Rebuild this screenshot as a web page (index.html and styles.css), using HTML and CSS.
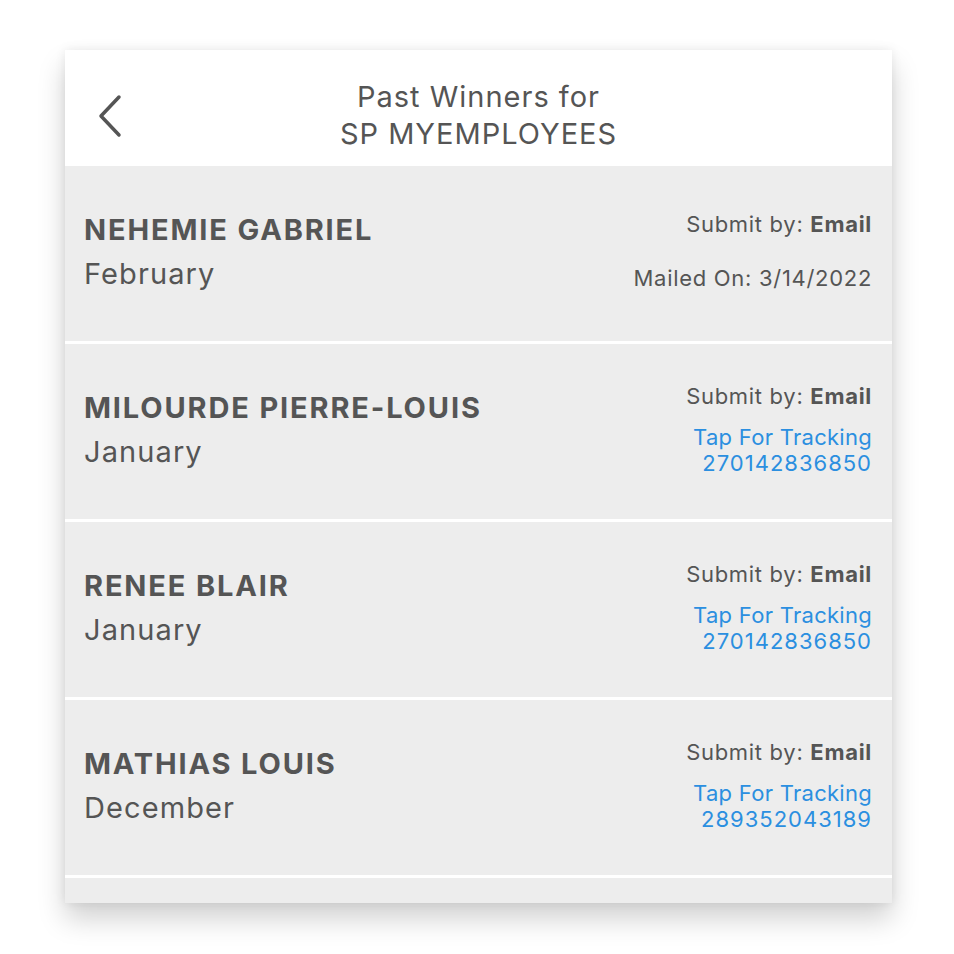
FILE: index.html
```html
<!DOCTYPE html>
<html>
<head>
<meta charset="utf-8">
<link rel="stylesheet" href="styles.css">
</head>
<body>
<div class="card">
  <header class="header">
    <svg class="back" width="30" height="44" viewBox="0 0 30 44"><path d="M24 3 L6 22 L24 41" fill="none" stroke="#555" stroke-width="3.5" stroke-linecap="round" stroke-linejoin="round"/></svg>
    <div class="title">Past Winners for<br>SP MYEMPLOYEES</div>
  </header>
  <div class="row">
    <div class="left"><div class="name">NEHEMIE GABRIEL</div><div class="month">February</div></div>
    <div class="right"><div class="submit">Submit by: <b>Email</b></div><div class="mailed">Mailed On: 3/14/2022</div></div>
  </div>
  <div class="row">
    <div class="left"><div class="name">MILOURDE PIERRE-LOUIS</div><div class="month">January</div></div>
    <div class="right"><div class="submit sp">Submit by: <b>Email</b></div><div class="link">Tap For Tracking</div><div class="link num">270142836850</div></div>
  </div>
  <div class="row">
    <div class="left"><div class="name">RENEE BLAIR</div><div class="month">January</div></div>
    <div class="right"><div class="submit sp">Submit by: <b>Email</b></div><div class="link">Tap For Tracking</div><div class="link num">270142836850</div></div>
  </div>
  <div class="row">
    <div class="left"><div class="name">MATHIAS LOUIS</div><div class="month">December</div></div>
    <div class="right"><div class="submit sp">Submit by: <b>Email</b></div><div class="link">Tap For Tracking</div><div class="link num">289352043189</div></div>
  </div>
  <div class="row partial"></div>
</div>
</body>
</html>
```
FILE: styles.css
```css
html, body { margin: 0; padding: 0; background: #fff; }
body { width: 954px; height: 954px; overflow: hidden; font-family: Inter, "Helvetica Neue", Arial, sans-serif; color: #555; }
.card {
  margin: 50px 0 0 65px;
  width: 827px;
  height: 853px;
  overflow: hidden;
  background: #ededed;
  box-shadow: 0 16px 26px rgba(0,0,0,0.18), 0 0 10px rgba(0,0,0,0.08);
}
.header {
  height: 116px;
  background: #fff;
  position: relative;
  display: flex;
  align-items: center;
  justify-content: center;
}
.back { position: absolute; left: 30px; top: 44px; }
.title { text-align: center; font-size: 29px; line-height: 37px; letter-spacing: 1px; color: #555; padding-top: 14px; }
.row {
  height: 175px;
  border-bottom: 3px solid #fff;
  display: flex;
  align-items: center;
  justify-content: space-between;
  padding: 0 20px 0 19px;
}
.left { margin-top: -4px; }
.left .name { font-size: 29px; font-weight: 700; line-height: 44px; letter-spacing: 1.85px; }
.left .month { font-size: 29px; line-height: 44px; letter-spacing: 1.1px; }
.right { text-align: right; font-size: 22px; line-height: 26px; letter-spacing: 0.7px; margin-top: -5px; }
.right b { font-weight: 700; }
.submit.sp { margin-bottom: 15px; }
.mailed { margin-top: 28px; }
.link { color: #2b8fe0; letter-spacing: 0.28px; }
.link.num { letter-spacing: 1px; }
```
